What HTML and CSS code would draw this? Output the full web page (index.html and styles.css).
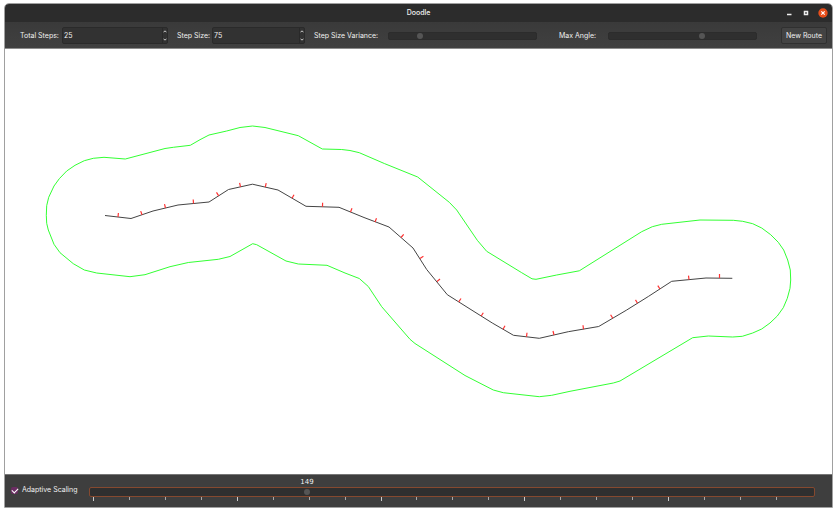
FILE: index.html
```html
<!DOCTYPE html>
<html lang="en">
<head>
<meta charset="utf-8">
<title>Doodle</title>
<link rel="stylesheet" href="styles.css">
</head>
<body>
<main class="window">
  <header class="titlebar">
    <h1 class="title">Doodle</h1>
    <div class="window-buttons">
      <button class="window-button" aria-label="Minimize"><svg viewBox="0 0 10 10"><path d="M3 6.500h4.500" stroke="#eee" stroke-width="1.500"/></svg></button>
      <button class="window-button" aria-label="Maximize"><svg viewBox="0 0 10 10"><path d="M3.500 3.500h3v3h-3z" fill="none" stroke="#eee" stroke-width="1.500"/></svg></button>
      <button class="window-button" aria-label="Close"><svg viewBox="0 0 10 10"><circle cx="5" cy="5" r="4.700" fill="#e84e1b"/><path d="M3.300 3.300l3.400 3.400M6.700 3.300l-3.400 3.400" stroke="#fff" stroke-width="1.200"/></svg></button>
    </div>
  </header>

  <form class="toolbar">
    <div class="field field-steps">
      <label for="steps">Total Steps:</label>
      <div class="spin">
        <input id="steps" type="number" value="25">
        <div class="arrows">
          <button type="button" aria-label="More steps"><svg viewBox="0 0 4 3"><path d="M.5 2.300L2 .8l1.500 1.500"/></svg></button>
          <button type="button" aria-label="Fewer steps"><svg viewBox="0 0 4 3"><path d="M.5.7L2 2.200 3.500.7"/></svg></button>
        </div>
      </div>
    </div>
    <div class="field field-size">
      <label for="size">Step Size:</label>
      <div class="spin">
        <input id="size" type="number" value="75">
        <div class="arrows">
          <button type="button" aria-label="Larger steps"><svg viewBox="0 0 4 3"><path d="M.5 2.300L2 .8l1.500 1.500"/></svg></button>
          <button type="button" aria-label="Smaller steps"><svg viewBox="0 0 4 3"><path d="M.5.7L2 2.200 3.500.7"/></svg></button>
        </div>
      </div>
    </div>
    <div class="field field-variance">
      <label for="variance">Step Size Variance:</label>
      <input id="variance" class="slider" type="range" min="0" max="100" value="20">
    </div>
    <div class="field field-angle">
      <label for="angle">Max Angle:</label>
      <input id="angle" class="slider" type="range" min="0" max="100" value="64">
    </div>
    <button type="button" class="route-button">New Route</button>
  </form>

  <section class="canvas">
    <svg viewBox="5 49 827 425" role="img" aria-label="Route">
      <path class="outline" d="M46.300 215.300L46.700 205.700 48.700 197.300 54 186 59.300 178.700 66.700 171 75 165.300 84.300 160.700 93.300 158.300 104 157.300 125.300 159 165 148.500 173.300 147.300 190.300 145.300 200 139.700 209 135 226.700 131 240 127.500 252.500 126 265 127.500 298.300 135.700 322.300 149 341.700 149.500 350 150.500 359.300 152.700 384.300 163.500 417.700 177 449.300 202.300 456.700 210 477.300 240.300 486.700 251.300 521.700 272.700 532 278.800 536 279.300 556.700 275 579.300 270.800 641.700 231.700 652.300 226.700 661.700 224.300 700 220 733.300 220.300 742.700 221.300 752.700 223.700 761.700 228 770.700 234.700 778.300 242.300 783.700 250 787.700 260 790.300 270 790.700 280 790 288.300 787.300 298.300 783.300 307.700 777.300 316 770 323 761.700 329 752.700 333 742.300 336.300 732.700 337 708.300 336 692.700 337.700 620 381 613.300 383 570 391.300 551.700 395.300 539.300 396.700 503.300 392.700 493.300 390 465 375.500 415 343.500 410 339.300 381.700 306.700 368.300 286.500 359.300 278.500 345 273 327 265.300 298.300 264 286 261 256.700 244.700 252.700 243.700 230 256.500 218.300 259.300 188.300 262.500 170 266.700 145 274.700 130 276.700 96.700 273 84.300 270 73.300 263.700 60 252.700 54 244.300 48.300 230 46.700 223.300Z"/>
      <path class="spine" d="M105 215.500L131 218.500 153 211 178 205 209 202 228.500 189.500 252.500 184.200 278 190 306 206.300 339 207.300 364 217.500 389 227 413 248 426.700 269.500 447.300 294.700 470 309 492.300 323 513.500 335.300 539.300 338.300 568.300 331.700 598.700 326.500 626.700 310 648.300 296.500 671.700 281.300 706 278 732.300 278.300"/>
      <path class="normals" d="M118 217l.4-4M142 214.800l-1.300-3.700M165.500 208l-1-3.800M193.500 203.500l-.3-4M218.700 195.800l-2.200-3.400M240.500 186.800l-.9-3.900M265.300 187l.9-3.800M292 198.200l2-3.500M322.500 206.800l.1-4M350.500 212l1.500-3.700M375 222l1.500-3.700M401 237.500l2.700-3.200M420 258.500l3.400-2.200M437 281.500l3-2.500M458.700 301.800l2.300-3.300M481.200 316l2.100-3.300M503 329.200l2-3.500M526.500 336.800l.5-4M554 335l-1-4M583.500 329.200l-.5-4M612.800 318.300l-2.200-3.600M637.500 303.300l-2-3.400M660 289l-2.200-3.300M689 279.600l-.5-4M719.500 278v-4"/>
    </svg>
  </section>

  <footer class="footer">
    <label class="check"><input type="checkbox" checked><span>Adaptive Scaling</span></label>
    <div class="scale">
      <div class="scale-values"><output class="scale-value" for="scale">149</output></div>
      <input id="scale" class="slider slider-focus" type="range" min="0" max="500" value="149" aria-label="Scale">
      <div class="ticks">
        <i class="major"></i><i></i><i></i><i></i><i class="major"></i><i></i><i></i><i></i><i class="major"></i><i></i><i></i><i></i><i class="major"></i><i></i><i></i><i></i><i class="major"></i><i></i><i></i><i></i>
      </div>
    </div>
  </footer>
</main>
</body>
</html>
```

FILE: styles.css
```css
* { box-sizing: border-box; }

body {
  margin: 0;
  padding: 3px 4px 4px;
  height: 100vh;
  background: #fff;
  color: #f0f0f0;
  font: 7px/10px Inter, sans-serif;
}

button, input { font: inherit; color: inherit; margin: 0; }

.window {
  height: 100%;
  display: flex;
  flex-direction: column;
  border: 1px solid #a0a0a0;
  border-radius: 5px 5px 0 0;
  overflow: hidden;
}

.titlebar {
  display: grid;
  grid-template-columns: 1fr auto 1fr;
  align-items: center;
  height: 18px;
  padding: 0 4px;
  background: #2c2c2c;
}

.title { grid-column: 2; margin: 0; font-size: 7px; font-weight: 500; }

.window-buttons { display: flex; justify-content: flex-end; gap: 7px; }

.window-button {
  width: 10px;
  height: 10px;
  padding: 0;
  border: 0;
  background: none;
}

.window-button svg { display: block; }

.toolbar {
  display: flex;
  align-items: center;
  height: 27px;
  padding: 1px 5px 0 15px;
  background: linear-gradient(#3a3a3a, #404040);
  border-bottom: 1px solid #8c8c8c;
}

.field { display: flex; align-items: center; min-width: 0; white-space: nowrap; }
.field-steps { flex: 148 1 0; margin-right: 9px; }
.field-size { flex: 128 1 0; margin-right: 9px; }
.field-variance { flex: 223 1 0; margin-right: 22px; }
.field-angle { flex: 198 1 0; margin-right: 24px; }
.field-steps label { flex: 0 0 42px; }
.field-size label { flex: 0 0 35px; }
.field-variance label { flex: 0 0 74px; }
.field-angle label { flex: 0 0 49px; }

.spin {
  flex: 1;
  min-width: 0;
  display: flex;
  height: 17px;
  background: #323232;
  border: 1px solid #2a2a2a;
  border-radius: 2px;
}

.spin input {
  flex: 1;
  min-width: 0;
  padding: 0 1px;
  border: 0;
  background: none;
  appearance: textfield;
  outline: 0;
}

.spin input::-webkit-inner-spin-button { appearance: none; }

.arrows {
  width: 5px;
  display: flex;
  flex-direction: column;
  justify-content: space-between;
  padding: 2px 0;
  border-left: 1px solid #292929;
}

.arrows button { height: 3px; padding: 0; border: 0; background: none; display: flex; }
.arrows svg { width: 4px; height: 3px; fill: none; stroke: #ccc; stroke-width: 1; }

.slider {
  flex: 1;
  min-width: 0;
  height: 8px;
  appearance: none;
  background: #2f2f2f;
  border: 1px solid #2c2c2c;
  border-radius: 2px;
  outline: 0;
}

.slider::-webkit-slider-thumb {
  appearance: none;
  width: 6px;
  height: 6px;
  border-radius: 50%;
  background: #555;
}

.route-button {
  width: 46px;
  height: 17px;
  padding: 0;
  border: 1px solid #303030;
  border-radius: 2px;
  background: #434343;
  white-space: nowrap;
}

.canvas { flex: 1; min-height: 0; background: #fff; }
.canvas svg { display: block; width: 100%; height: 100%; fill: none; }
.outline { stroke: #3f3; stroke-width: 1; }
.spine { stroke: #444; stroke-width: 1; }
.normals { stroke: #f33; stroke-width: 1.200; }

.footer {
  display: flex;
  align-items: center;
  gap: 13px;
  height: 33px;
  padding: 0 17px 2px 6px;
  background: #3e3e3e;
  border-top: 1px solid #777;
}

.check { display: flex; align-items: center; gap: 4px; width: 65px; white-space: nowrap; }

.check input {
  flex: none;
  width: 7px;
  height: 7px;
  appearance: none;
  border-radius: 2px;
  background: #6b2d63;
  display: grid;
}

.check input:checked::before {
  content: "";
  width: 5px;
  height: 3px;
  margin: 1px;
  border: solid #fff;
  border-width: 0 0 1px 1px;
  transform: rotate(-45deg);
}

.scale { flex: 1; display: flex; flex-direction: column; }
.scale-values { position: relative; height: 8px; margin: 0 4px; }

.scale-value {
  position: absolute;
  left: 29.800%;
  transform: translateX(-50%);
  font: 7px/7px "DejaVu Sans", sans-serif;
}

.slider-focus { flex: none; width: 100%; height: 10px; border-color: #85492f; }
.ticks { display: flex; justify-content: space-between; height: 4px; padding: 0 38px 0 4px; }
.ticks i { width: 1px; height: 3px; background: #aaa; }
.ticks .major { height: 4px; background: #ccc; }
```
